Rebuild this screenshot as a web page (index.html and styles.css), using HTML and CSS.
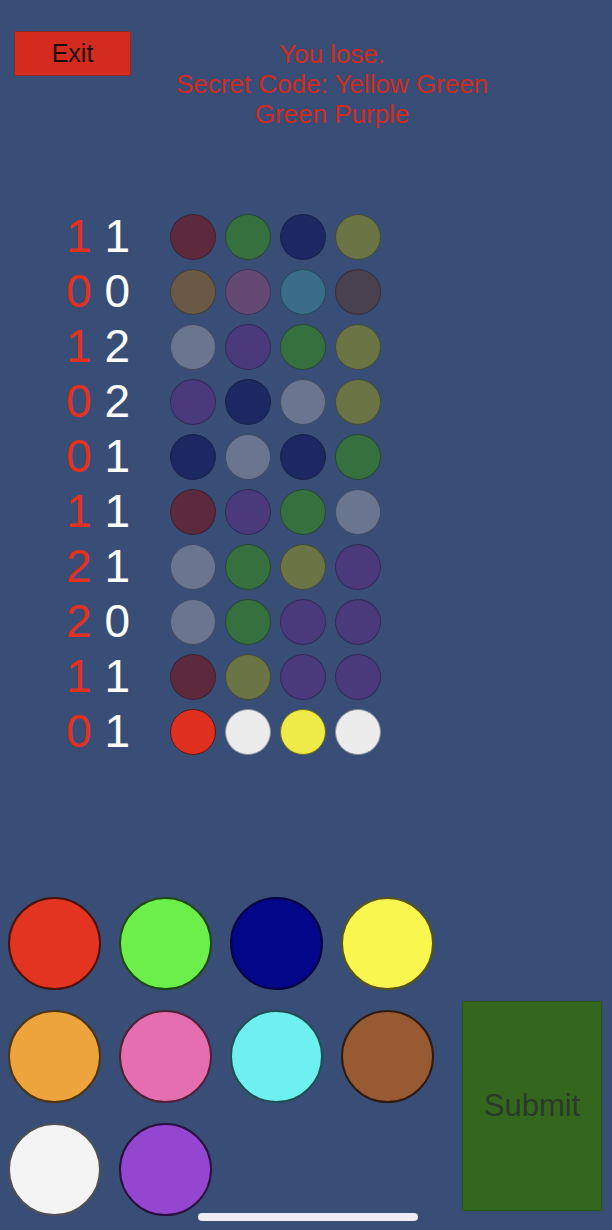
FILE: index.html
```html
<!DOCTYPE html>
<html>
<head>
<meta charset="utf-8">
<link rel="stylesheet" href="styles.css">
</head>
<body>
<div class="screen">
  <header class="header">
    <button class="exit">Exit</button>
    <div class="message">You lose.<br>Secret Code: Yellow Green<br>Green Purple</div>
  </header>

  <section class="board">
    <div class="row"><div class="score"><span class="hit">1</span> <span class="near">1</span></div><div class="pegs"><i class="peg d-red"></i><i class="peg d-green"></i><i class="peg d-navy"></i><i class="peg d-yellow"></i></div></div>
    <div class="row"><div class="score"><span class="hit">0</span> <span class="near">0</span></div><div class="pegs"><i class="peg d-orange"></i><i class="peg d-pink"></i><i class="peg d-cyan"></i><i class="peg d-brown"></i></div></div>
    <div class="row"><div class="score"><span class="hit">1</span> <span class="near">2</span></div><div class="pegs"><i class="peg d-white"></i><i class="peg d-purple"></i><i class="peg d-green"></i><i class="peg d-yellow"></i></div></div>
    <div class="row"><div class="score"><span class="hit">0</span> <span class="near">2</span></div><div class="pegs"><i class="peg d-purple"></i><i class="peg d-navy"></i><i class="peg d-white"></i><i class="peg d-yellow"></i></div></div>
    <div class="row"><div class="score"><span class="hit">0</span> <span class="near">1</span></div><div class="pegs"><i class="peg d-navy"></i><i class="peg d-white"></i><i class="peg d-navy"></i><i class="peg d-green"></i></div></div>
    <div class="row"><div class="score"><span class="hit">1</span> <span class="near">1</span></div><div class="pegs"><i class="peg d-red"></i><i class="peg d-purple"></i><i class="peg d-green"></i><i class="peg d-white"></i></div></div>
    <div class="row"><div class="score"><span class="hit">2</span> <span class="near">1</span></div><div class="pegs"><i class="peg d-white"></i><i class="peg d-green"></i><i class="peg d-yellow"></i><i class="peg d-purple"></i></div></div>
    <div class="row"><div class="score"><span class="hit">2</span> <span class="near">0</span></div><div class="pegs"><i class="peg d-white"></i><i class="peg d-green"></i><i class="peg d-purple"></i><i class="peg d-purple"></i></div></div>
    <div class="row"><div class="score"><span class="hit">1</span> <span class="near">1</span></div><div class="pegs"><i class="peg d-red"></i><i class="peg d-yellow"></i><i class="peg d-purple"></i><i class="peg d-purple"></i></div></div>
    <div class="row"><div class="score"><span class="hit">0</span> <span class="near">1</span></div><div class="pegs"><i class="peg b-red"></i><i class="peg b-white"></i><i class="peg b-yellow"></i><i class="peg b-white"></i></div></div>
  </section>

  <section class="controls">
    <div class="palette">
      <i class="swatch s-red"></i>
      <i class="swatch s-green"></i>
      <i class="swatch s-navy"></i>
      <i class="swatch s-yellow"></i>
      <i class="swatch s-orange"></i>
      <i class="swatch s-pink"></i>
      <i class="swatch s-cyan"></i>
      <i class="swatch s-brown"></i>
      <i class="swatch s-white"></i>
      <i class="swatch s-purple"></i>
    </div>
    <button class="submit">Submit</button>
  </section>

  <div class="home-indicator"></div>
</div>
</body>
</html>
```

FILE: styles.css
```css
html, body {
  margin: 0;
  padding: 0;
}
body {
  background: #394e77;
  font-family: "Liberation Sans", Arial, sans-serif;
}
.screen {
  position: relative;
  width: 612px;
  height: 1230px;
  overflow: hidden;
  background: #394e77;
}

/* header */
.header {
  display: flex;
  align-items: flex-start;
  padding: 31px 0 0 14px;
}
.exit {
  width: 117px;
  height: 45px;
  margin: 0;
  padding: 0;
  background: #d42b1f;
  border: 1px solid #8f2a22;
  border-radius: 2px;
  color: #1a0b08;
  font-family: "Liberation Sans", Arial, sans-serif;
  font-size: 25px;
}
.message {
  width: 340px;
  margin: 8px 0 0 31px;
  text-align: center;
  color: #cf2a1e;
  font-size: 26px;
  line-height: 30px;
}

/* board */
.board {
  display: flex;
  flex-direction: column;
  margin-top: 80px;
}
.row {
  display: flex;
  align-items: center;
  height: 55px;
}
.score {
  width: 101px;
  padding-left: 66px;
  box-sizing: border-box;
  font-size: 46px;
  line-height: 55px;
  white-space: pre;
}
.hit { color: #e3301f; }
.near { color: #ffffff; }
.pegs {
  display: flex;
  gap: 9px;
  margin-left: 69px;
}
.peg {
  display: block;
  width: 46px;
  height: 46px;
  border-radius: 50%;
  box-sizing: border-box;
  border: 1.5px solid rgba(20, 25, 45, 0.45);
}
.d-red { background: #5c2a3c; }
.d-green { background: #37703f; }
.d-navy { background: #1c2862; }
.d-yellow { background: #6b7445; }
.d-orange { background: #6a5a45; }
.d-pink { background: #644a72; }
.d-cyan { background: #3a6e88; }
.d-brown { background: #4a4150; }
.d-white { background: #6a7690; }
.d-purple { background: #4a3a7b; }
.b-red { background: #df2f1f; border-color: #5a1510; }
.b-white { background: #ececec; border-color: #8a8f99; }
.b-yellow { background: #eeea48; border-color: #6d6a20; }

/* controls */
.controls {
  display: flex;
  align-items: flex-start;
  margin-top: 138px;
  padding-left: 8px;
}
.palette {
  display: grid;
  grid-template-columns: repeat(4, 93px);
  grid-auto-rows: 93px;
  column-gap: 18px;
  row-gap: 20px;
}
.swatch {
  display: block;
  width: 93px;
  height: 93px;
  border-radius: 50%;
  box-sizing: border-box;
  border: 2px solid rgba(0, 0, 0, 0.6);
}
.s-red { background: #e33321; border-color: #4a120c; }
.s-green { background: #6cef4a; border-color: #1f4a15; }
.s-navy { background: #02078a; border-color: #02053f; }
.s-yellow { background: #f8f64f; border-color: #56541a; }
.s-orange { background: #eda43c; border-color: #4e3512; }
.s-pink { background: #e56fae; border-color: #4e2139; }
.s-cyan { background: #6ef0f0; border-color: #1f4f55; }
.s-brown { background: #985a33; border-color: #2e1a10; }
.s-white { background: #f4f4f4; border-color: #4f4f55; }
.s-purple { background: #9546d1; border-color: #2a1040; }

.submit {
  width: 140px;
  height: 210px;
  margin: 104px 0 0 28px;
  padding: 0;
  background: #34661e;
  border: 1px solid #2a561a;
  border-radius: 1px;
  color: #2a3a28;
  font-family: "Liberation Sans", Arial, sans-serif;
  font-size: 31px;
}

.home-indicator {
  position: absolute;
  left: 198px;
  top: 1213px;
  width: 220px;
  height: 8px;
  border-radius: 4px;
  background: #eeeef2;
}
```
